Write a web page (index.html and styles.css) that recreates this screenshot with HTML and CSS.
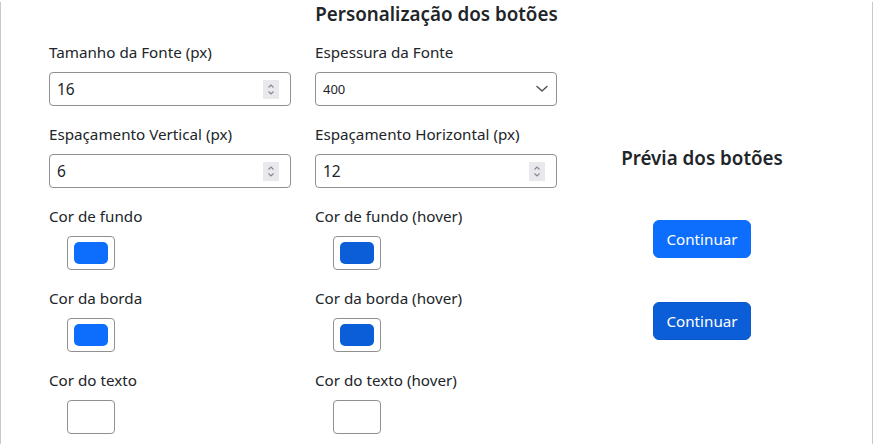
FILE: index.html
```html
<!DOCTYPE html>
<html lang="pt-BR">
<head>
<meta charset="utf-8">
<title>Personalização dos botões</title>
<link rel="stylesheet" href="styles.css">
</head>
<body>
<div class="page">
  <h5 class="page-title">Personalização dos botões</h5>
  <div class="layout">
    <form class="settings">
      <div class="field">
        <label class="label">Tamanho da Fonte (px)</label>
        <div class="control number"><span class="value">16</span><span class="spin"><svg width="16" height="19" viewBox="0 0 16 19"><path d="M5.5 7.5 L8 5 L10.5 7.5" fill="none" stroke="#85858c" stroke-width="1.1"/><path d="M5.5 11.5 L8 14 L10.5 11.5" fill="none" stroke="#85858c" stroke-width="1.1"/></svg></span></div>
      </div>
      <div class="field">
        <label class="label">Espessura da Fonte</label>
        <div class="control select"><span class="value small">400</span><svg class="chev" width="14" height="8" viewBox="0 0 14 8"><path d="M2 1.5 L7 6 L12 1.5" fill="none" stroke="#495057" stroke-width="1.4" stroke-linecap="round" stroke-linejoin="round"/></svg></div>
      </div>
      <div class="field">
        <label class="label">Espaçamento Vertical (px)</label>
        <div class="control number"><span class="value">6</span><span class="spin"><svg width="16" height="19" viewBox="0 0 16 19"><path d="M5.5 7.5 L8 5 L10.5 7.5" fill="none" stroke="#85858c" stroke-width="1.1"/><path d="M5.5 11.5 L8 14 L10.5 11.5" fill="none" stroke="#85858c" stroke-width="1.1"/></svg></span></div>
      </div>
      <div class="field">
        <label class="label">Espaçamento Horizontal (px)</label>
        <div class="control number"><span class="value">12</span><span class="spin"><svg width="16" height="19" viewBox="0 0 16 19"><path d="M5.5 7.5 L8 5 L10.5 7.5" fill="none" stroke="#85858c" stroke-width="1.1"/><path d="M5.5 11.5 L8 14 L10.5 11.5" fill="none" stroke="#85858c" stroke-width="1.1"/></svg></span></div>
      </div>
      <div class="field">
        <label class="label">Cor de fundo</label>
        <span class="swatch"><span class="chip blue"></span></span>
      </div>
      <div class="field">
        <label class="label">Cor de fundo (hover)</label>
        <span class="swatch"><span class="chip blue-dark"></span></span>
      </div>
      <div class="field">
        <label class="label">Cor da borda</label>
        <span class="swatch"><span class="chip blue"></span></span>
      </div>
      <div class="field">
        <label class="label">Cor da borda (hover)</label>
        <span class="swatch"><span class="chip blue-dark"></span></span>
      </div>
      <div class="field">
        <label class="label">Cor do texto</label>
        <span class="swatch"><span class="chip white"></span></span>
      </div>
      <div class="field">
        <label class="label">Cor do texto (hover)</label>
        <span class="swatch"><span class="chip white"></span></span>
      </div>
    </form>
    <aside class="preview">
      <h5 class="preview-title">Prévia dos botões</h5>
      <button class="btn" type="button">Continuar</button>
      <button class="btn hover" type="button">Continuar</button>
    </aside>
  </div>
</div>
</body>
</html>
```

FILE: styles.css
```css
* { box-sizing: border-box; }
html, body { margin: 0; padding: 0; background: #fff; }
body {
  font-family: "Noto Sans", "Open Sans", sans-serif;
  font-size: 15.2px;
  color: #212529;
}
.page {
  min-height: 444px;
  border-left: 1px solid #c9c9c9;
  border-right: 1px solid #c9c9c9;
  padding: 0 48px;
}
.page-title {
  margin: 2px 0 14px;
  font-size: 18.8px;
  line-height: 24px;
  font-weight: 600;
  text-align: center;
}
.layout {
  display: grid;
  grid-template-columns: 508px 242px;
  column-gap: 24px;
}
.settings {
  display: grid;
  grid-template-columns: 242px 242px;
  column-gap: 24px;
  margin: 0;
}
.field { margin-bottom: 16px; }
.label {
  display: block;
  line-height: 24px;
  margin-bottom: 8px;
}
.control {
  height: 34px;
  border: 1px solid #8f8f94;
  border-radius: 4px;
  display: flex;
  align-items: center;
  justify-content: space-between;
  padding: 0 11px 0 7px;
  background: #fff;
}
.value { font-size: 15.5px; }
.value.small { font-size: 13px; }
.spin {
  display: flex;
  width: 16px;
  height: 19px;
  background: #e9e9ed;
}
.select { padding-right: 7px; }
.chev { display: block; }
.swatch {
  display: flex;
  align-items: center;
  justify-content: center;
  width: 48px;
  height: 34px;
  margin-left: 18px;
  border: 1px solid #8f8f94;
  border-radius: 4px;
  background: #fff;
}
.chip {
  display: block;
  width: 34px;
  height: 22px;
  border-radius: 5px;
}
.chip.blue { background: #0d6efd; }
.chip.blue-dark { background: #0b5ed7; }
.chip.white { background: #fff; }
.preview {
  display: flex;
  flex-direction: column;
  align-items: center;
  padding-top: 106px;
}
.preview-title {
  margin: 0 0 50px;
  font-size: 18.8px;
  line-height: 24px;
  font-weight: 600;
}
.btn {
  font-family: inherit;
  font-size: 15.2px;
  line-height: 24px;
  padding: 6px 12px;
  width: 98px;
  color: #fff;
  background: #0d6efd;
  border: 1px solid #0d6efd;
  border-radius: 6px;
  margin-bottom: 44px;
}
.btn.hover { background: #0b5ed7; border-color: #0a58ca; }
```
